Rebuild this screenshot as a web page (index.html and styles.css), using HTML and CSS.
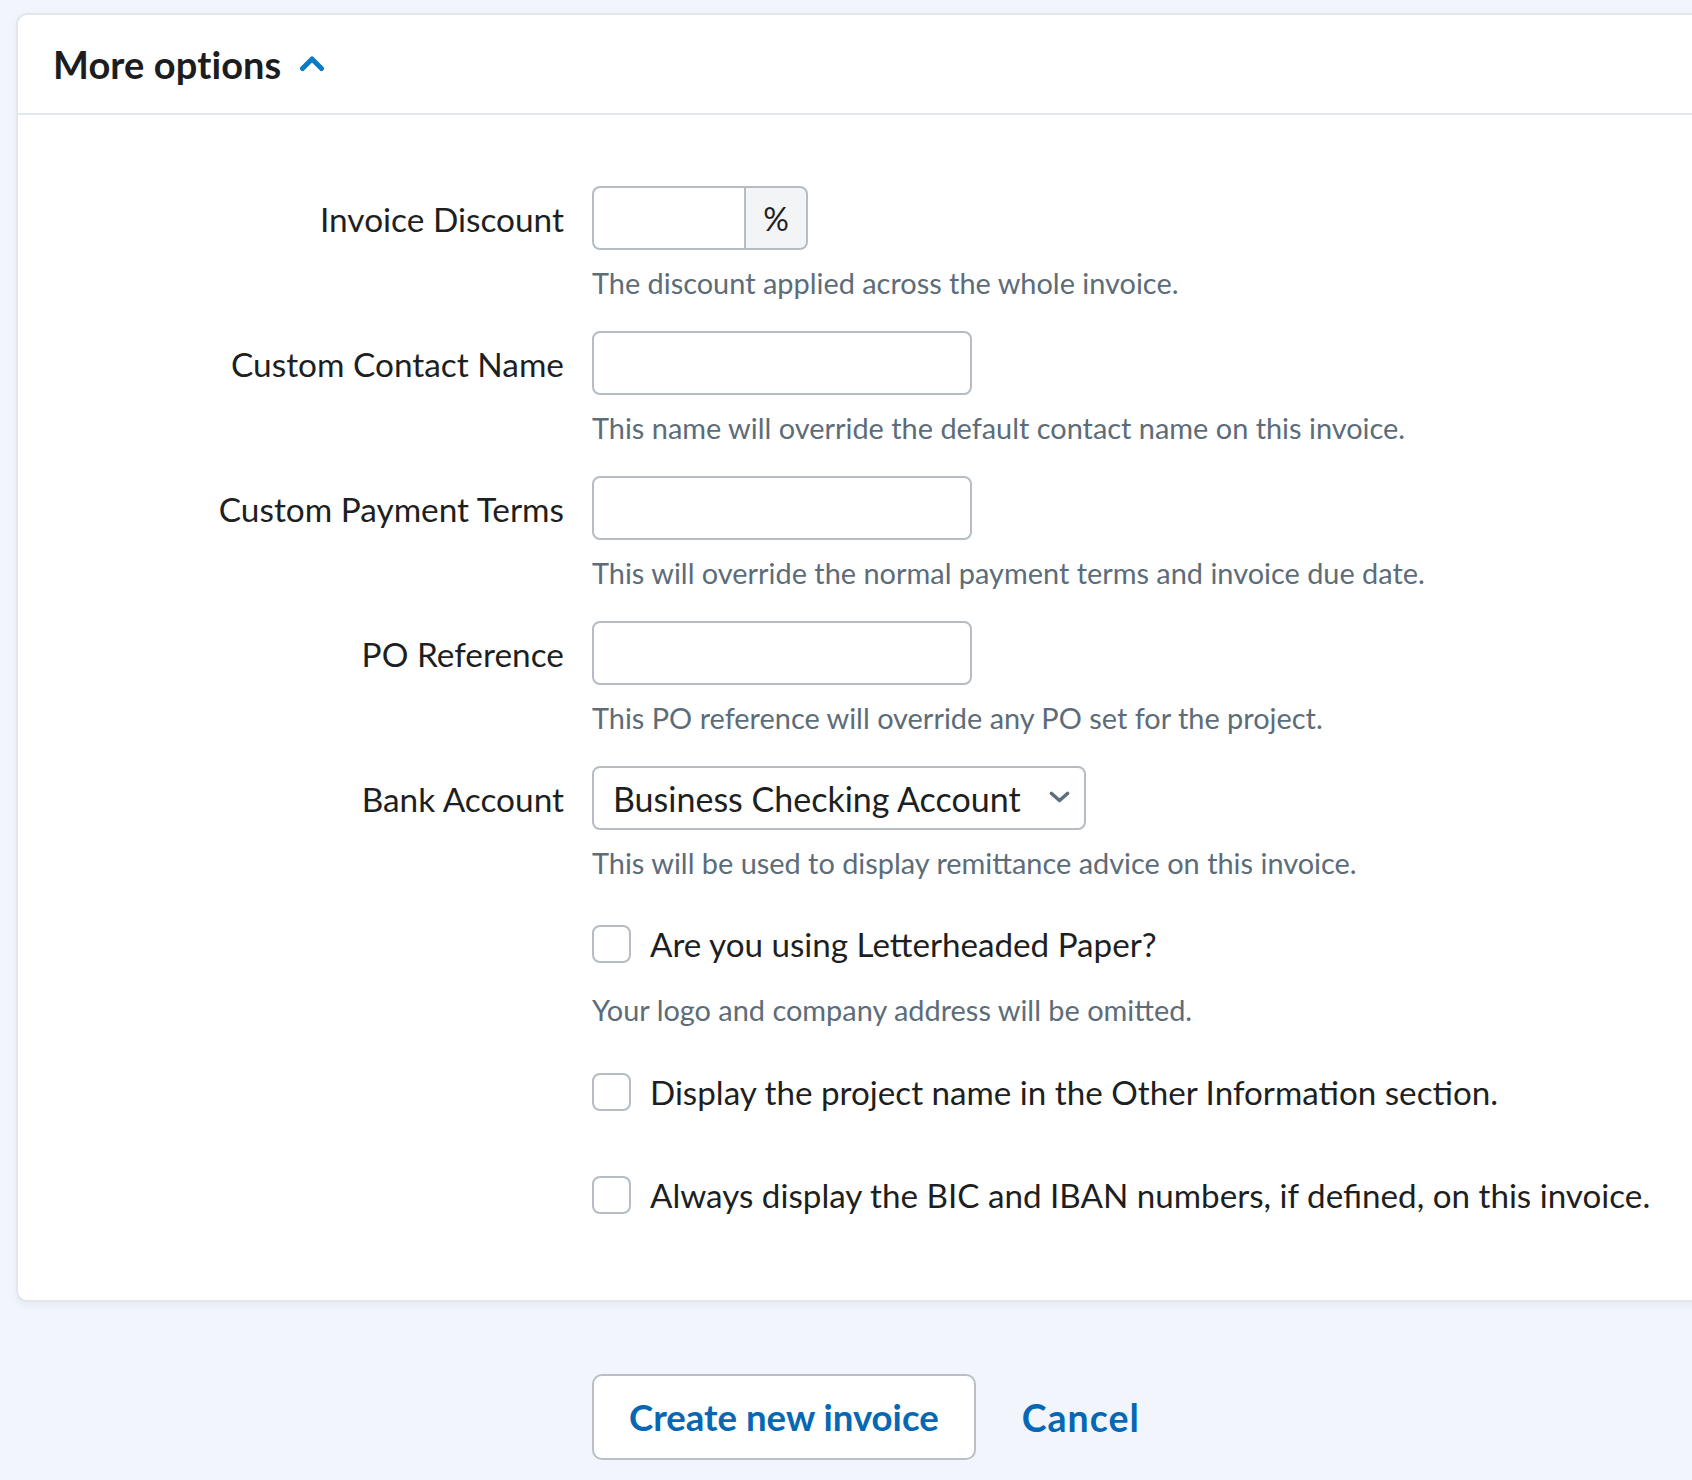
FILE: index.html
```html
<!DOCTYPE html>
<html lang="en">
<head>
<meta charset="utf-8">
<title>More options</title>
<link rel="stylesheet" href="styles.css">
</head>
<body>
<div class="page">
  <section class="card">
    <header class="card-header">
      <h2 class="card-title">More options</h2>
      <svg class="chev-up" width="26" height="17" viewBox="0 0 26 17" aria-hidden="true">
        <polyline points="3.5,13.5 13,4 22.5,13.5" fill="none" stroke="#0a7bc4" stroke-width="5" stroke-linecap="round" stroke-linejoin="round"/>
      </svg>
    </header>
    <div class="card-body">
      <div class="form-row">
        <label class="field-label" for="disc">Invoice Discount</label>
        <div class="field">
          <div class="input-group">
            <input id="disc" class="input input-grouped" type="text">
            <span class="addon">%</span>
          </div>
          <p class="help">The discount applied across the whole invoice.</p>
        </div>
      </div>
      <div class="form-row">
        <label class="field-label" for="ccn">Custom Contact Name</label>
        <div class="field">
          <input id="ccn" class="input input-text" type="text">
          <p class="help">This name will override the default contact name on this invoice.</p>
        </div>
      </div>
      <div class="form-row">
        <label class="field-label" for="cpt">Custom Payment Terms</label>
        <div class="field">
          <input id="cpt" class="input input-text" type="text">
          <p class="help">This will override the normal payment terms and invoice due date.</p>
        </div>
      </div>
      <div class="form-row">
        <label class="field-label" for="po">PO Reference</label>
        <div class="field">
          <input id="po" class="input input-text" type="text">
          <p class="help">This PO reference will override any PO set for the project.</p>
        </div>
      </div>
      <div class="form-row">
        <label class="field-label" for="bank">Bank Account</label>
        <div class="field">
          <div class="select-wrap">
            <select id="bank" class="select">
              <option>Business Checking Account</option>
            </select>
            <svg class="chev-down" width="21" height="12" viewBox="0 0 21 12" aria-hidden="true">
              <polyline points="2.5,2.5 10.5,9.5 18.5,2.5" fill="none" stroke="#5f6e7b" stroke-width="3.6" stroke-linecap="round" stroke-linejoin="round"/>
            </svg>
          </div>
          <p class="help">This will be used to display remittance advice on this invoice.</p>
        </div>
      </div>
      <div class="form-row check-row check-first">
        <div></div>
        <div class="field">
          <label class="check"><span class="box"></span><span>Are you using Letterheaded Paper?</span></label>
          <p class="help help-check">Your logo and company address will be omitted.</p>
        </div>
      </div>
      <div class="form-row check-row check-second">
        <div></div>
        <div class="field">
          <label class="check"><span class="box"></span><span>Display the project name in the Other Information section.</span></label>
        </div>
      </div>
      <div class="form-row check-row check-third">
        <div></div>
        <div class="field">
          <label class="check"><span class="box"></span><span>Always display the BIC and IBAN numbers, if defined, on this invoice.</span></label>
        </div>
      </div>
    </div>
  </section>
  <div class="actions">
    <button class="btn" type="button">Create new invoice</button>
    <a class="link" href="#">Cancel</a>
  </div>
</div>
</body>
</html>
```

FILE: styles.css
```css
html, body {
  margin: 0;
  padding: 0;
  overflow: hidden;
  background: #f2f6fc;
}

body {
  font-family: "Lato", "Liberation Sans", sans-serif;
  color: #1d1f22;
}

.page {
  padding: 13px 0 0 16px;
}

.card {
  width: 1720px;
  background: #ffffff;
  border: 2px solid #e2e7ed;
  border-radius: 11px;
  box-shadow: 0 3px 8px rgba(120, 150, 190, 0.12);
}

.card-header {
  height: 98px;
  display: flex;
  align-items: center;
  padding: 0 35px;
  border-bottom: 2px solid #e2e7ed;
}

.card-title {
  margin: 0;
  font-size: 38px;
  font-weight: 700;
  color: #1b1d20;
  letter-spacing: 0.1px;
}

.chev-up {
  margin-left: 18px;
  margin-top: -2px;
}

.card-body {
  padding: 71px 0 85px 0;
}

.form-row {
  display: grid;
  grid-template-columns: 546px 1fr;
  column-gap: 28px;
  margin-bottom: 28px;
}

.field-label {
  text-align: right;
  font-size: 33.4px;
  line-height: 64px;
  color: #1d1f22;
  margin-top: 1px;
}

.field {
  display: flex;
  flex-direction: column;
  align-items: flex-start;
}

.input {
  box-sizing: border-box;
  height: 64px;
  border: 2px solid #b5bcc3;
  border-radius: 8px;
  background: #fff;
  font-family: inherit;
  font-size: 34px;
  padding: 0 18px;
  color: #1d1f22;
  outline: none;
}

.input-text {
  width: 380px;
}

.input-group {
  display: flex;
  width: 216px;
  height: 64px;
}

.input-grouped {
  width: 152px;
  border-right: none;
  border-radius: 8px 0 0 8px;
}

.addon {
  box-sizing: border-box;
  width: 64px;
  height: 64px;
  display: flex;
  align-items: center;
  justify-content: center;
  background: #f3f4f6;
  border: 2px solid #b5bcc3;
  border-radius: 0 8px 8px 0;
  font-size: 32px;
  color: #1d1f22;
}

.select-wrap {
  position: relative;
  width: 494px;
  height: 64px;
}

.select {
  box-sizing: border-box;
  width: 494px;
  height: 64px;
  appearance: none;
  -webkit-appearance: none;
  border: 2px solid #b5bcc3;
  border-radius: 8px;
  background: #fff;
  font-family: inherit;
  font-size: 34px;
  color: #1d1f22;
  padding: 0 50px 0 19px;
  outline: none;
}

.chev-down {
  position: absolute;
  right: 16px;
  top: 25px;
  pointer-events: none;
}

.help {
  margin: 13px 0 0 0;
  font-size: 28.9px;
  line-height: 40px;
  color: #5c6c79;
}

.check-first {
  margin-top: 41px;
  margin-bottom: 0;
}

.help-check {
  margin-top: 26px;
}

.check-second {
  margin-top: 42px;
  margin-bottom: 0;
}

.check-third {
  margin-top: 63px;
  margin-bottom: 0;
}

.check {
  display: flex;
  align-items: center;
  gap: 19px;
  height: 40px;
  font-size: 33.2px;
  color: #1d1f22;
  white-space: nowrap;
}

.box {
  box-sizing: border-box;
  width: 39px;
  height: 38px;
  border: 2px solid #b5bcc3;
  border-radius: 8px;
  background: #fff;
  flex: none;
}

.actions {
  display: flex;
  align-items: center;
  gap: 46px;
  margin-top: 72px;
  padding-left: 576px;
}

.btn {
  box-sizing: border-box;
  height: 86px;
  padding: 0 35px;
  border: 2px solid #b9bfc5;
  border-radius: 10px;
  background: #ffffff;
  font-family: inherit;
  font-size: 36.6px;
  font-weight: 700;
  color: #0667b4;
  cursor: pointer;
}

.link {
  font-size: 37.5px;
  font-weight: 700;
  letter-spacing: 1px;
  color: #0667b4;
  text-decoration: none;
}
```
